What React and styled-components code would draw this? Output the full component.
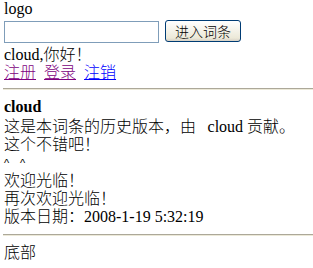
import React from 'react';
import styled, { createGlobalStyle } from 'styled-components';

const GlobalStyle = createGlobalStyle`
    html, body {
        margin: 0;
        padding: 0;
        background: #ffffff;
    }
    body {
        font-family: "Liberation Serif", "Noto Sans CJK SC", serif;
        font-size: 16px;
        line-height: 18px;
        color: #000000;
    }
`;

const Page = styled.div`
    padding: 0 0 0 4px;
`;

const Line = styled.div`
    height: 18px;
    white-space: nowrap;
`;

const SearchForm = styled.form`
    display: flex;
    align-items: flex-start;
    gap: 6px;
    margin: 2px 0 2px 0;
    height: 22px;
`;

const SearchInput = styled.input`
    box-sizing: border-box;
    width: 155px;
    height: 22px;
    margin-top: 1px;
    border: 1px solid #7f9db9;
    padding: 0 2px;
    outline: none;
`;

const EnterButton = styled.button`
    box-sizing: border-box;
    width: 76px;
    height: 22px;
    padding: 0;
    border: 1px solid #003c74;
    border-radius: 3px;
    background: linear-gradient(#ffffff, #ece9d8 85%, #d6d0c5);
    font-family: "Noto Sans CJK SC", sans-serif;
    font-weight: 300;
    font-size: 14px;
    line-height: 18px;
    color: #000;
`;

const Cjk = styled.span`
    font-family: "Noto Sans CJK SC", sans-serif;
    font-weight: 300;
`;

const NavLink = styled.a`
    font-family: "Noto Sans CJK SC", sans-serif;
    font-weight: 300;
    color: ${({ visited }) => (visited ? '#800080' : '#0000ff')};
    text-decoration: underline;
    margin-right: 8px;
`;

const Rule = styled.hr`
    height: 0;
    border: none;
    border-top: 1px solid #aca899;
    border-bottom: 1px solid #ece9d8;
    margin: ${({ top }) => top}px 0 ${({ bottom }) => bottom}px -1px;
`;

const Author = styled.div`
    font-weight: bold;
    height: 18px;
`;

const Smile = styled.div`
    display: flex;
    gap: 10px;
    height: 18px;
    padding-top: 5px;
    box-sizing: border-box;
    font-family: "Liberation Sans", sans-serif;
    font-size: 11px;
    line-height: normal;
`;

const Caret = styled.span`
    display: block;
    width: 6px;
`;

const App = () => {
    return (
        <Page>
            <GlobalStyle />
            <Line>logo</Line>
            <SearchForm onSubmit={(e) => e.preventDefault()}>
                <SearchInput type="text" />
                <EnterButton type="submit">进入词条</EnterButton>
            </SearchForm>
            <Line>
                cloud,<Cjk>你好！</Cjk>
            </Line>
            <Line>
                <NavLink href="#" visited>注册</NavLink>
                <NavLink href="#" visited>登录</NavLink>
                <NavLink href="#">注销</NavLink>
            </Line>
            <Rule top={8} bottom={8} />
            <Author>cloud</Author>
            <Line>
                <Cjk>这是本词条的历史版本，由 </Cjk>&nbsp; cloud <Cjk>贡献。</Cjk>
            </Line>
            <Line>
                <Cjk>这个不错吧！</Cjk>
            </Line>
            <Smile>
                <Caret>^</Caret>
                <Caret>^</Caret>
            </Smile>
            <Line>
                <Cjk>欢迎光临！</Cjk>
            </Line>
            <Line>
                <Cjk>再次欢迎光临！</Cjk>
            </Line>
            <Line>
                <Cjk>版本日期：</Cjk>2008-1-19 5:32:19
            </Line>
            <Rule top={10} bottom={6} />
            <Line>
                <Cjk>底部</Cjk>
            </Line>
        </Page>
    );
};

export default App;
